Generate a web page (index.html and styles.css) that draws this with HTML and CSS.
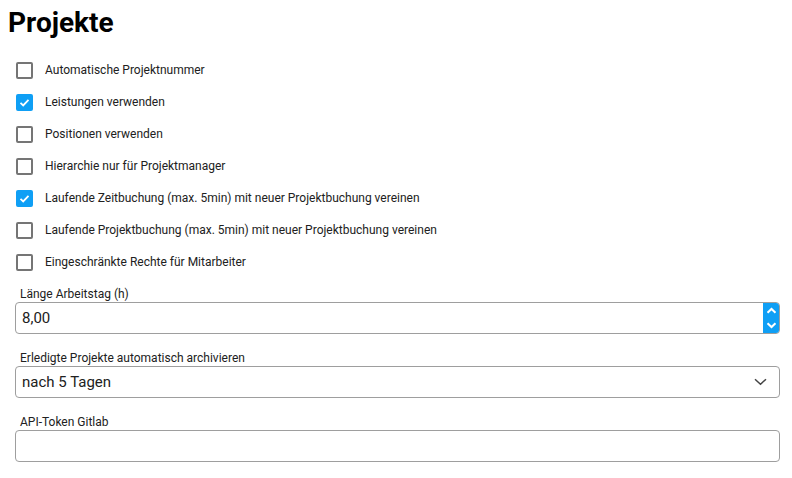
FILE: index.html
```html
<!DOCTYPE html>
<html lang="de">
<head>
    <meta charset="UTF-8">
    <meta name="viewport" content="width=device-width, initial-scale=1.0">
    <title>Projekte</title>
    <link rel="stylesheet" href="styles.css">
</head>
<body>

<div class="page">
    <h1>Projekte</h1>

    <div class="optionen">
        <label class="option"><input type="checkbox"> <span>Automatische Projektnummer</span></label>
        <label class="option"><input type="checkbox" checked> <span>Leistungen verwenden</span></label>
        <label class="option"><input type="checkbox"> <span>Positionen verwenden</span></label>
        <label class="option"><input type="checkbox"> <span>Hierarchie nur für Projektmanager</span></label>
        <label class="option"><input type="checkbox" checked> <span>Laufende Zeitbuchung (max. 5min) mit neuer Projektbuchung vereinen</span></label>
        <label class="option"><input type="checkbox"> <span>Laufende Projektbuchung (max. 5min) mit neuer Projektbuchung vereinen</span></label>
        <label class="option"><input type="checkbox"> <span>Eingeschränkte Rechte für Mitarbeiter</span></label>
    </div>

    <div class="feld">
        <label for="arbeitstag">Länge Arbeitstag (h)</label>
        <div class="eingabe zahl">
            <input type="text" id="arbeitstag" value="8,00">
            <div class="spinner">
                <svg width="11" height="7" viewBox="0 0 11 7"><path d="M1.5 5.8 L5.5 2 L9.5 5.8" fill="none" stroke="#fff" stroke-width="2"/></svg>
                <svg width="11" height="7" viewBox="0 0 11 7"><path d="M1.5 1.2 L5.5 5 L9.5 1.2" fill="none" stroke="#fff" stroke-width="2"/></svg>
            </div>
        </div>
    </div>

    <div class="feld">
        <label for="archiv">Erledigte Projekte automatisch archivieren</label>
        <div class="eingabe auswahl">
            <span id="archiv">nach 5 Tagen</span>
            <svg width="13" height="8" viewBox="0 0 13 8"><path d="M1 1.2 L6.5 6.2 L12 1.2" fill="none" stroke="#444" stroke-width="1.5"/></svg>
        </div>
    </div>

    <div class="feld">
        <label for="token">API-Token Gitlab</label>
        <div class="eingabe">
            <input type="text" id="token">
        </div>
    </div>
</div>

</body>
</html>
```

FILE: styles.css
```css
body {
    font-family: Roboto, "Liberation Sans", Arial, sans-serif;
    color: #212121;
    background-color: #fff;
    margin: 0;
}

.page {
    padding: 6px 12px 0 8px;
}

h1 {
    font-size: 28px;
    font-weight: bold;
    line-height: 34px;
    margin: 0 0 14px;
    color: #000;
}

.optionen {
    padding-left: 8px;
}

.option {
    display: flex;
    align-items: center;
    height: 32px;
    font-size: 12px;
}

.option input {
    appearance: none;
    -webkit-appearance: none;
    width: 17px;
    height: 17px;
    margin: 0 12px 0 0;
    border: 2px solid #757575;
    border-radius: 2px;
    box-sizing: border-box;
    background: #fff;
}

.option input:checked {
    border-color: #0f9ff5;
    background: #0f9ff5 url("data:image/svg+xml,%3Csvg xmlns='http://www.w3.org/2000/svg' width='13' height='13' viewBox='0 0 13 13'%3E%3Cpath d='M2.5 6.8 L5.2 9.4 L10.5 3.8' fill='none' stroke='white' stroke-width='1.8'/%3E%3C/svg%3E") center / 13px 13px no-repeat;
}

.feld {
    padding-left: 7px;
    margin-top: 9px;
}

.feld + .feld {
    margin-top: 17px;
}

.feld label {
    display: block;
    font-size: 12px;
    line-height: 14px;
    margin: 0 0 1px 5px;
}

.eingabe {
    display: flex;
    align-items: center;
    width: 765px;
    height: 32px;
    border: 1px solid #9e9e9e;
    border-radius: 4px;
    box-sizing: border-box;
    background: #fff;
}

.eingabe input {
    flex: 1;
    border: none;
    outline: none;
    height: 100%;
    padding: 0 6px;
    font-family: inherit;
    font-size: 15px;
    color: #212121;
    background: transparent;
}

.zahl {
    overflow: hidden;
}

.spinner {
    display: flex;
    flex-direction: column;
    justify-content: center;
    align-items: center;
    gap: 8px;
    width: 17px;
    height: 32px;
    margin-right: -1px;
    background: #0f9ff5;
    border-radius: 0 4px 4px 0;
}

.auswahl {
    justify-content: space-between;
    padding: 0 12px 0 6px;
    font-size: 15px;
}
```
